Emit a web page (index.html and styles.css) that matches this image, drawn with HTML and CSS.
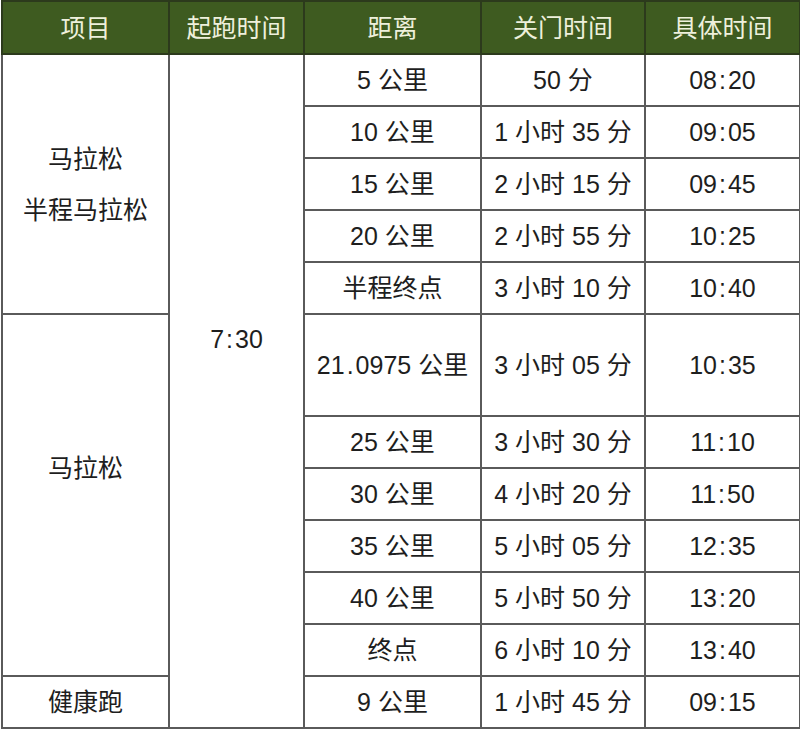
FILE: index.html
```html
<!DOCTYPE html>
<html lang="zh-CN">
<head>
<meta charset="utf-8">
<title>关门时间</title>
<link rel="stylesheet" href="styles.css">
</head>
<body>
<table class="schedule">
  <colgroup>
    <col class="c1"><col class="c2"><col class="c3"><col class="c4"><col class="c5">
  </colgroup>
  <thead>
    <tr class="head">
      <th>项目</th><th>起跑时间</th><th>距离</th><th>关门时间</th><th>具体时间</th>
    </tr>
  </thead>
  <tbody>
    <tr>
      <td rowspan="5" class="event"><div class="line">马拉松</div><div class="line">半程马拉松</div></td>
      <td rowspan="12" class="start">7<span class="sep">:</span>30</td>
      <td>5 公里</td><td>50 分</td><td>08<span class="sep">:</span>20</td>
    </tr>
    <tr><td>10 公里</td><td>1 小时 35 分</td><td>09<span class="sep">:</span>05</td></tr>
    <tr><td>15 公里</td><td>2 小时 15 分</td><td>09<span class="sep">:</span>45</td></tr>
    <tr><td>20 公里</td><td>2 小时 55 分</td><td>10<span class="sep">:</span>25</td></tr>
    <tr><td>半程终点</td><td>3 小时 10 分</td><td>10<span class="sep">:</span>40</td></tr>
    <tr class="tall">
      <td rowspan="6" class="event marathon">马拉松</td>
      <td>21<span class="sep">.</span>0975 公里</td><td>3 小时 05 分</td><td>10<span class="sep">:</span>35</td>
    </tr>
    <tr><td>25 公里</td><td>3 小时 30 分</td><td>11<span class="sep">:</span>10</td></tr>
    <tr><td>30 公里</td><td>4 小时 20 分</td><td>11<span class="sep">:</span>50</td></tr>
    <tr><td>35 公里</td><td>5 小时 05 分</td><td>12<span class="sep">:</span>35</td></tr>
    <tr><td>40 公里</td><td>5 小时 50 分</td><td>13<span class="sep">:</span>20</td></tr>
    <tr><td>终点</td><td>6 小时 10 分</td><td>13<span class="sep">:</span>40</td></tr>
    <tr><td>健康跑</td><td>9 公里</td><td>1 小时 45 分</td><td>09<span class="sep">:</span>15</td></tr>
  </tbody>
</table>
</body>
</html>
```
FILE: styles.css
```css
html, body {
  margin: 0;
  padding: 0;
  background: #ffffff;
}

.schedule {
  margin: 0 0 0 1px;
  width: 798px;
  border-collapse: collapse;
  table-layout: fixed;
  font-family: "Liberation Sans", "Noto Sans CJK SC", sans-serif;
  font-size: 25px;
  color: #1e1e1e;
}

.c1 { width: 167px; }
.c2 { width: 135px; }
.c3 { width: 177px; }
.c4 { width: 164px; }
.c5 { width: 155px; }

.schedule th,
.schedule td {
  border: 2px solid #5a5a5a;
  text-align: center;
  vertical-align: middle;
  padding: 0;
  line-height: 30px;
}

.schedule .head {
  height: 53px;
}

.schedule .head th {
  background: #3e5b20;
  color: #eef0dc;
  font-weight: 400;
  border-color: #2c3a1c;
}

.schedule tbody tr {
  height: 52px;
}

.schedule tbody tr.tall {
  height: 102px;
}

.schedule .sep {
  margin: 0 2px;
}

.schedule .event .line + .line {
  margin-top: 21px;
}

.schedule td.marathon {
  vertical-align: top;
  padding-top: 138px;
}

.schedule td.start {
  vertical-align: top;
  padding-top: 269px;
}
```
